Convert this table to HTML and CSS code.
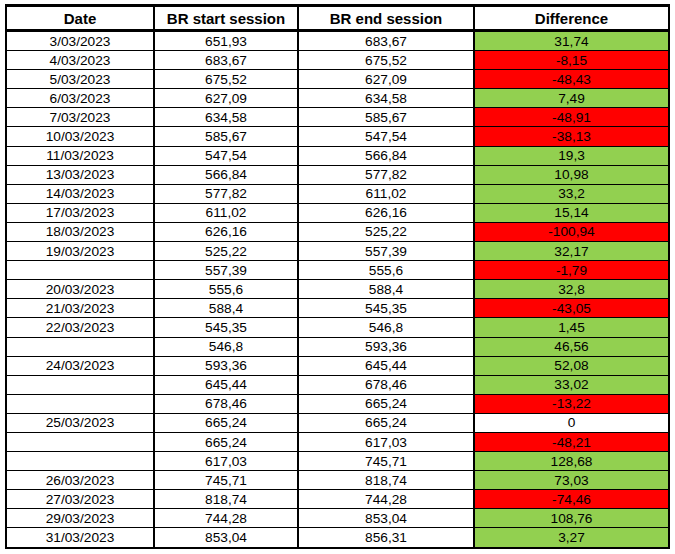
FILE: index.html
```html
<!DOCTYPE html>
<html lang="en">
<head>
<meta charset="utf-8">
<title>BR sessions March 2023</title>
<link rel="stylesheet" href="styles.css">
</head>
<body>
<table class="sheet">
  <colgroup>
    <col class="c-date">
    <col class="c-start">
    <col class="c-end">
    <col class="c-diff">
  </colgroup>
  <thead>
    <tr><th>Date</th><th>BR start session</th><th>BR end session</th><th>Difference</th></tr>
  </thead>
  <tbody>
    <tr><td>3/03/2023</td><td>651,93</td><td>683,67</td><td class="up">31,74</td></tr>
    <tr><td>4/03/2023</td><td>683,67</td><td>675,52</td><td class="down">-8,15</td></tr>
    <tr><td>5/03/2023</td><td>675,52</td><td>627,09</td><td class="down">-48,43</td></tr>
    <tr><td>6/03/2023</td><td>627,09</td><td>634,58</td><td class="up">7,49</td></tr>
    <tr><td>7/03/2023</td><td>634,58</td><td>585,67</td><td class="down">-48,91</td></tr>
    <tr><td>10/03/2023</td><td>585,67</td><td>547,54</td><td class="down">-38,13</td></tr>
    <tr><td>11/03/2023</td><td>547,54</td><td>566,84</td><td class="up">19,3</td></tr>
    <tr><td>13/03/2023</td><td>566,84</td><td>577,82</td><td class="up">10,98</td></tr>
    <tr><td>14/03/2023</td><td>577,82</td><td>611,02</td><td class="up">33,2</td></tr>
    <tr><td>17/03/2023</td><td>611,02</td><td>626,16</td><td class="up">15,14</td></tr>
    <tr><td>18/03/2023</td><td>626,16</td><td>525,22</td><td class="down">-100,94</td></tr>
    <tr><td>19/03/2023</td><td>525,22</td><td>557,39</td><td class="up">32,17</td></tr>
    <tr><td></td><td>557,39</td><td>555,6</td><td class="down">-1,79</td></tr>
    <tr><td>20/03/2023</td><td>555,6</td><td>588,4</td><td class="up">32,8</td></tr>
    <tr><td>21/03/2023</td><td>588,4</td><td>545,35</td><td class="down">-43,05</td></tr>
    <tr><td>22/03/2023</td><td>545,35</td><td>546,8</td><td class="up">1,45</td></tr>
    <tr><td></td><td>546,8</td><td>593,36</td><td class="up">46,56</td></tr>
    <tr><td>24/03/2023</td><td>593,36</td><td>645,44</td><td class="up">52,08</td></tr>
    <tr><td></td><td>645,44</td><td>678,46</td><td class="up">33,02</td></tr>
    <tr><td></td><td>678,46</td><td>665,24</td><td class="down">-13,22</td></tr>
    <tr><td>25/03/2023</td><td>665,24</td><td>665,24</td><td>0</td></tr>
    <tr><td></td><td>665,24</td><td>617,03</td><td class="down">-48,21</td></tr>
    <tr><td></td><td>617,03</td><td>745,71</td><td class="up">128,68</td></tr>
    <tr><td>26/03/2023</td><td>745,71</td><td>818,74</td><td class="up">73,03</td></tr>
    <tr><td>27/03/2023</td><td>818,74</td><td>744,28</td><td class="down">-74,46</td></tr>
    <tr><td>29/03/2023</td><td>744,28</td><td>853,04</td><td class="up">108,76</td></tr>
    <tr><td>31/03/2023</td><td>853,04</td><td>856,31</td><td class="up">3,27</td></tr>
  </tbody>
</table>
</body>
</html>
```
FILE: styles.css
```css
html, body {
  margin: 0;
  padding: 0;
  background: #ffffff;
}

body {
  padding: 4px 0 0 5px;
  font-family: "Liberation Sans", Arial, sans-serif;
  color: #000000;
}

.sheet {
  border-collapse: separate;
  border-spacing: 0;
  table-layout: fixed;
  width: 665px;
  border-top: 3px solid #000;
  border-left: 2px solid #000;
}

.c-date { width: 148px; }
.c-start { width: 144px; }
.c-end { width: 176px; }
.c-diff { width: 195px; }

.sheet th,
.sheet td {
  padding: 0;
  text-align: center;
  vertical-align: middle;
  white-space: nowrap;
  border-right: 2px solid #000;
}

.sheet th {
  height: 22px;
  font-size: 15px;
  font-weight: bold;
  border-bottom: 3px solid #000;
}

.sheet td {
  height: 18.1px;
  font-size: 13.7px;
  border-bottom: 1px solid #000;
}

.sheet tbody tr:last-child td {
  border-bottom-width: 2px;
}

.up { background: #92d050; }
.down { background: #ff0000; }
```
